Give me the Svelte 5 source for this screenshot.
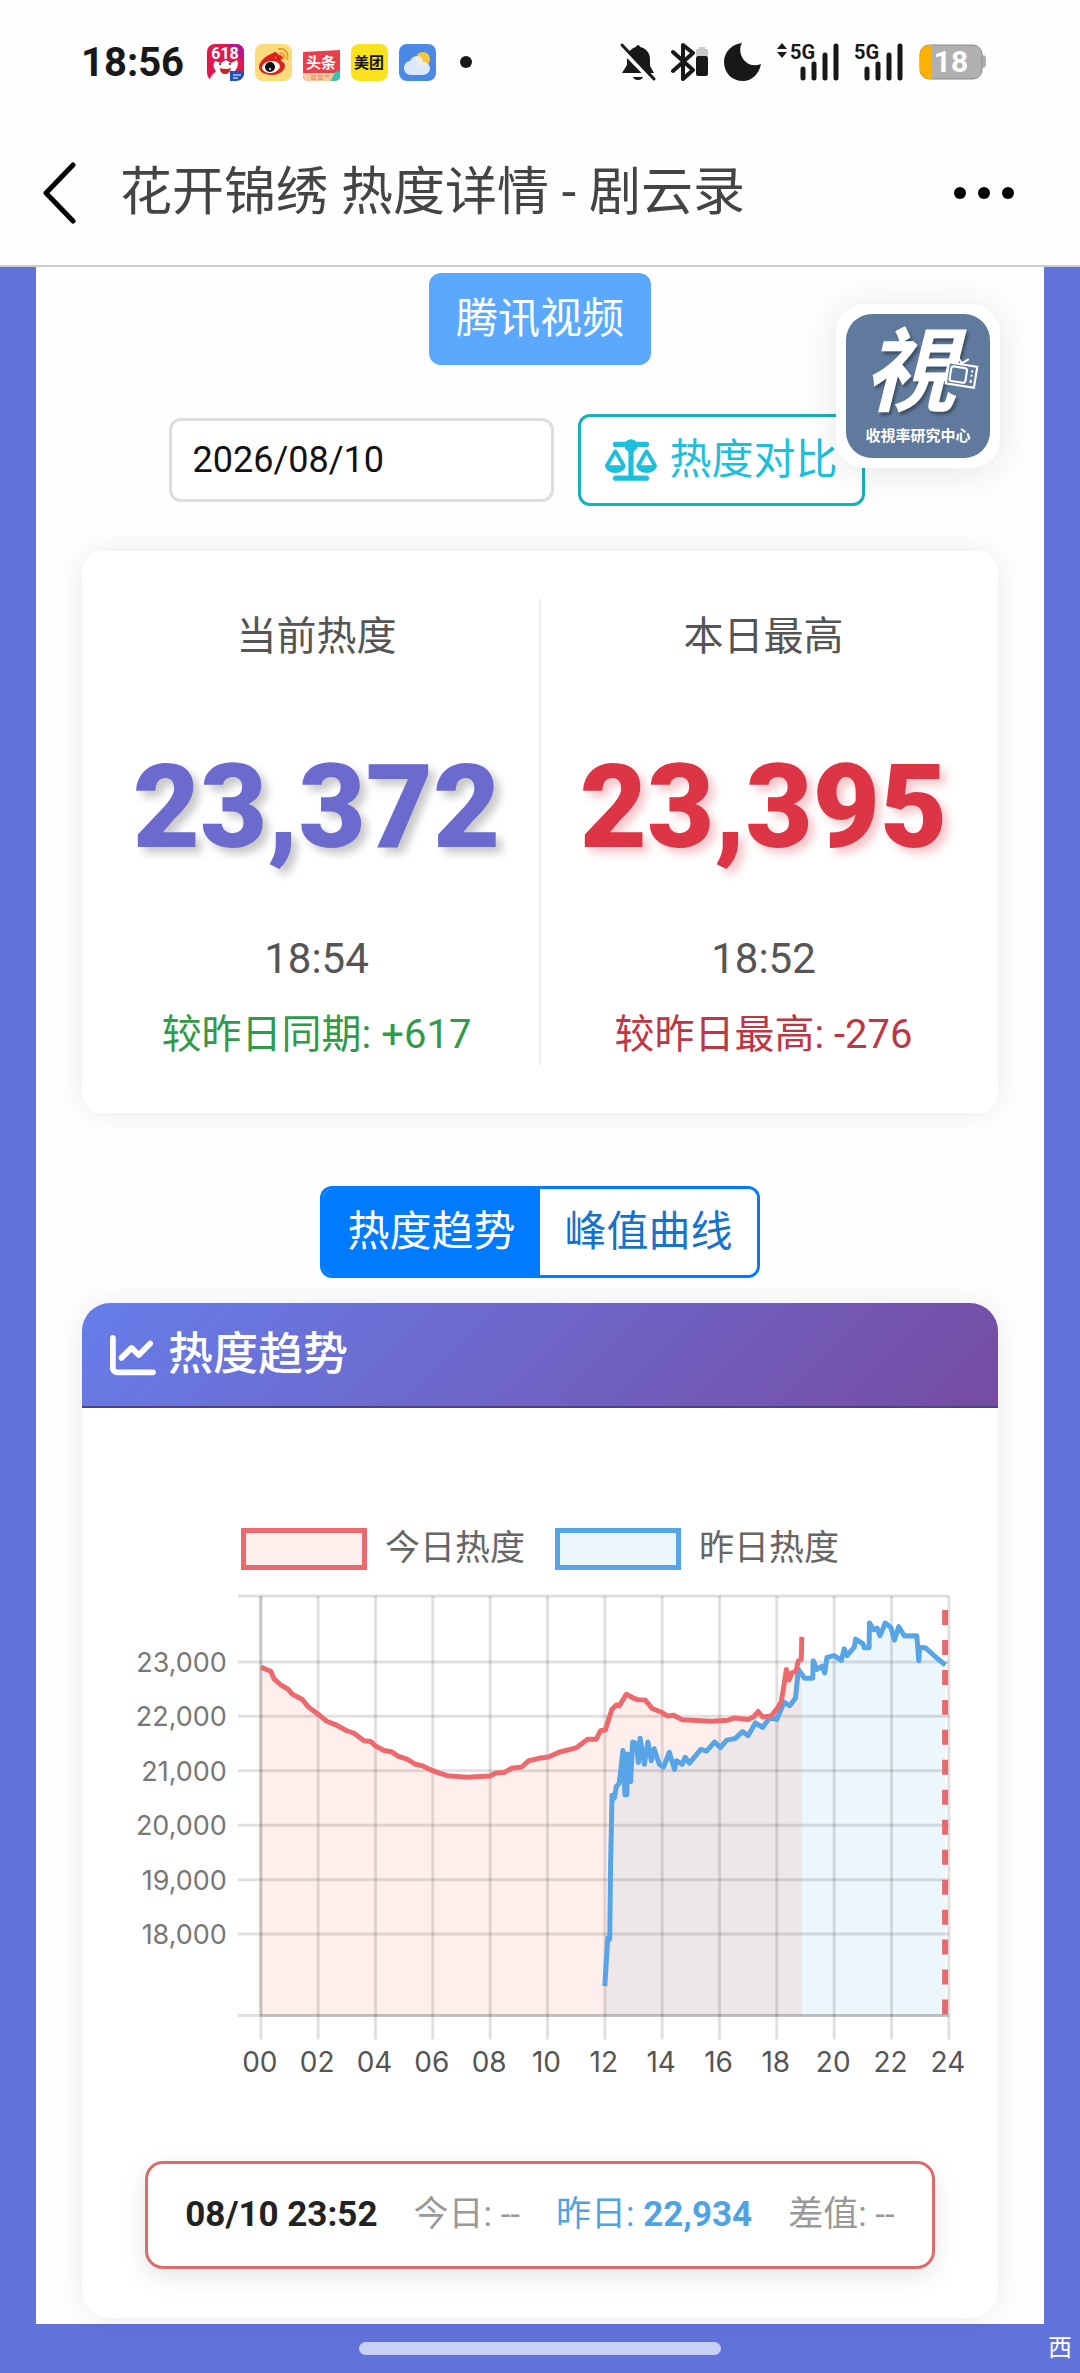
<script>
  let date = $state('2026/08/10');
  let tab = $state('trend');

  const tabs = [
    { id: 'trend', label: '热度趋势' },
    { id: 'peak', label: '峰值曲线' }
  ];

  const stats = [
    { label: '当前热度', value: '23,372', time: '18:54', diff: '较昨日同期: +617', kind: 'now', trend: 'up' },
    { label: '本日最高', value: '23,395', time: '18:52', diff: '较昨日最高: -276', kind: 'max', trend: 'down' }
  ];

  // [hour, heat]
  const today = [
    [0, 22905], [0.35, 22830], [0.46, 22690], [0.7, 22576], [0.95, 22500], [1.1, 22405], [1.45, 22310],
    [1.65, 22177], [2, 22040], [2.3, 21910], [2.6, 21850], [3, 21735], [3.25, 21690], [3.6, 21550],
    [3.83, 21540], [4, 21455], [4.3, 21375], [4.55, 21350], [4.8, 21266], [5.1, 21215], [5.4, 21120],
    [5.65, 21090], [5.9, 21025], [6.2, 20962], [6.5, 20910], [7.2, 20880], [8, 20905], [8.2, 20960],
    [8.5, 20970], [8.75, 21045], [9.1, 21070], [9.35, 21185], [9.7, 21230], [10.03, 21255], [10.4, 21342],
    [11, 21420], [11.4, 21582], [11.7, 21582], [11.85, 21735], [12.02, 21750], [12.15, 21975],
    [12.25, 22133], [12.4, 22210], [12.5, 22190], [12.75, 22405], [13, 22335], [13.15, 22303],
    [13.4, 22303], [13.65, 22145], [14, 22070], [14.2, 22005], [14.4, 22020], [14.7, 21937],
    [15.7, 21912], [16.3, 21930], [16.5, 21968], [17, 21943], [17.2, 21993], [17.35, 22090],
    [17.5, 21988], [17.8, 22005], [18.02, 22150], [18.15, 22260], [18.25, 22575], [18.33, 22860],
    [18.43, 22670], [18.53, 22800], [18.67, 22830], [18.75, 23020], [18.85, 23040], [18.87, 23460]
  ];

  const yesterday = [
    [12, 17045], [12.1, 17930], [12.17, 17910], [12.2, 19220], [12.25, 20550], [12.33, 20500],
    [12.4, 20710], [12.5, 20775], [12.58, 21120], [12.63, 21375], [12.7, 20560], [12.77, 20560],
    [12.78, 21310], [12.9, 20800], [12.97, 21530], [13.1, 21500], [13.17, 21150], [13.23, 21600],
    [13.38, 21120], [13.5, 21530], [13.62, 21185], [13.72, 21405], [13.9, 21120], [14.05, 21070],
    [14.25, 21342], [14.43, 21025], [14.5, 21185], [14.7, 21120], [14.8, 21250], [14.95, 21140],
    [15.35, 21393], [15.55, 21360], [15.83, 21530], [16.03, 21425], [16.25, 21563], [16.55, 21595],
    [16.8, 21720], [17, 21645], [17.25, 21880], [17.5, 21797], [17.75, 21975], [18, 21943],
    [18.25, 22260], [18.45, 22195], [18.65, 22335], [18.75, 22860], [18.97, 22700], [19.25, 22700],
    [19.27, 23020], [19.4, 22860], [19.58, 22925], [19.67, 22797], [19.75, 23082], [20, 23115],
    [20.25, 23030], [20.35, 23240], [20.45, 23115], [20.7, 23270], [20.75, 23418], [21, 23335],
    [21.05, 23260], [21.22, 23260], [21.23, 23715], [21.38, 23590], [21.5, 23620], [21.6, 23480],
    [21.78, 23715], [21.98, 23633], [22.1, 23400], [22.25, 23650], [22.45, 23475], [22.88, 23480],
    [22.95, 23020], [22.98, 23270], [23.2, 23255], [23.6, 23063], [23.88, 22943]
  ];

  const hours = [0, 2, 4, 6, 8, 10, 12, 14, 16, 18, 20, 22, 24];
  const ticks = [23000, 22000, 21000, 20000, 19000, 18000];

  const TOP = 10;
  const BOTTOM = 430;
  const x = (h) => 179 + h * 28.7;
  const y = (v) => 76 + (23000 - v) * 0.0545;

  const line = (pts) => 'M' + pts.map(([h, v]) => `${x(h).toFixed(1)} ${y(v).toFixed(1)}`).join('L');
  const area = (pts) => `${line(pts)}V${BOTTOM}H${x(pts[0][0])}Z`;
</script>

<div class="screen">
  <header>
    <div class="status">
      <span class="clock">18:56</span>
      <div class="apps">
        <svg viewBox="0 0 37 37">
          <rect width="37" height="37" rx="8" fill="#e0184e" />
          <path d="M20 0h9a8 8 0 0 1 8 8v9z" fill="#b5158f" />
          <text x="18" y="15" font-size="16" font-weight="700" fill="#fff" text-anchor="middle">618</text>
          <path d="M3 37c0-6 4-7 6-10-3-3-3-7-1-10l6 2 5-3 5 3 6-3c2 5 0 8-2 11 3 4 5 6 5 10z" fill="#fff" />
          <path d="M13 24q6 2 11 0-1 6-6 6t-5-6z" fill="#d32027" />
          <circle cx="13" cy="20" r="1" fill="#222" /><circle cx="23" cy="20" r="1" fill="#222" />
          <path d="M23 27h14v2a8 8 0 0 1-8 8h-6z" fill="#2251b8" />
          <path d="M26 31h8M26 34h5" stroke="#fff" stroke-width="1" />
        </svg>
        <svg viewBox="0 0 37 37">
          <rect width="37" height="37" rx="8" fill="#fbdc7c" />
          <path d="M16 12c-6 2-12 8-12 13 0 5 6 8 13 8 8 0 13-5 13-9 0-3-2-4-4-5 1-3 0-6-6-3 0-3 0-6-4-4z" fill="#dc2318" transform="translate(0 -2)" />
          <path d="M17 12q0-4 4-4l3 3q4 0 4 4" fill="#dc2318" />
          <ellipse cx="16" cy="23" rx="9" ry="6" fill="#fff" transform="rotate(-8 16 23)" />
          <circle cx="15" cy="23" r="5" fill="#111" /><circle cx="15" cy="25" r="1" fill="#fff" />
          <path d="M24 5c6-1 10 4 8 10M25 9c3 0 5 2 4 5" fill="none" stroke="#e9a02c" stroke-width="2" stroke-linecap="round" />
        </svg>
        <svg viewBox="0 0 37 37">
          <path d="M0 8l37-2v26a5 5 0 0 1-5 5H5a5 5 0 0 1-5-5z" fill="#e9404a" />
          <path d="M0 29h32l-4 8H5a5 5 0 0 1-5-5z" fill="#fac9a0" />
          <path d="M32 28l5-1v5a5 5 0 0 1-5 5h-4z" fill="#35c3b4" />
          <text x="18" y="24" font-size="15" font-weight="700" fill="#fff" text-anchor="middle">头条</text>
          <path d="M8 32h5M8 35h5M15 32h5M15 35h5M22 32h4" stroke="#e3704a" stroke-width="1" />
        </svg>
        <svg viewBox="0 0 37 37">
          <rect width="37" height="37" rx="8" fill="#f9e11e" />
          <text x="18" y="24" font-size="15" font-weight="700" fill="#15130a" text-anchor="middle">美团</text>
        </svg>
        <svg viewBox="0 0 37 37">
          <rect width="37" height="37" rx="8" fill="#4a8ae6" />
          <circle cx="24" cy="15" r="7" fill="#fbc73a" />
          <path d="M12 31c-4 0-7-3-7-7s3-7 6-7c1-3 4-5 7-5 4 0 6 3 6 6 4 0 7 3 7 6 0 4-3 7-7 7z" fill="#e9f1fb" fill-opacity=".92" />
        </svg>
      </div>
      <span class="more-dot"></span>
      <div class="system">
        <svg width="36" height="38" viewBox="0 0 36 38">
          <path d="M18 2c1 0 2 1 2 2 6 1 10 6 10 12v7l4 7H2l5-8v-6c0-6 4-11 9-12 0-1 1-2 2-2z" fill="#181818" />
          <path d="M13 34h10q-1 3-5 3t-5-3z" fill="#181818" />
          <path d="M0 5l32 33" stroke="#fff" stroke-width="4" />
          <path d="M2 2l32 34" stroke="#181818" stroke-width="3" stroke-linecap="round" />
        </svg>
        <svg width="38" height="38" viewBox="0 0 38 38">
          <path d="M2 9l20 18-10 9V2l10 8L2 28" fill="none" stroke="#181818" stroke-width="4" stroke-linejoin="round" stroke-linecap="round" />
          <path d="M25 13V6h3V4h6v2h3v7z" fill="#c9c9c9" />
          <rect x="25" y="13" width="12" height="20" rx="2" fill="#181818" />
        </svg>
        <svg width="38" height="38" viewBox="0 0 38 38">
          <path d="M18 0C12 10 22 27 37 21 35 31 28 38 19 38 8 38 0 30 0 19 0 9 8 1 18 0z" fill="#181818" />
        </svg>
        <svg width="62" height="54" viewBox="0 -8 62 54">
          <path d="M0 6l5-6 5 6zM0 9h10l-5 6z" fill="#181818" />
          <text x="13" y="16" font-size="20" font-weight="700" fill="#181818">5G</text>
          <path d="M26 26v9M37 21v14M48 12v23M59 3v32" stroke="#181818" stroke-width="5" stroke-linecap="round" />
        </svg>
        <svg width="50" height="54" viewBox="0 -8 50 54">
          <text x="0" y="16" font-size="20" font-weight="700" fill="#181818">5G</text>
          <path d="M13 26v9M24 21v14M35 12v23M46 3v32" stroke="#181818" stroke-width="5" stroke-linecap="round" />
        </svg>
        <svg width="68" height="36" viewBox="0 0 68 36">
          <path d="M63 11q4 0 4 3v7q0 3-4 3z" fill="#b0b0b0" />
          <rect x="1" y="1" width="62" height="34" rx="9" fill="#b0b0b0" stroke="#8b8b8b" />
          <path d="M13 1H10a9 9 0 0 0-9 9v16a9 9 0 0 0 9 9h3z" fill="#fcb100" />
          <text x="32" y="28" font-size="30" font-weight="700" fill="#fff" text-anchor="middle">18</text>
        </svg>
      </div>
    </div>

    <nav>
      <button class="icon-btn" aria-label="返回">
        <svg width="34" height="64" viewBox="0 0 34 64">
          <path d="M31 4L4 32l27 28" fill="none" stroke="#000" stroke-width="5" stroke-linecap="round" stroke-linejoin="round" />
        </svg>
      </button>
      <h1>花开锦绣 热度详情 - 剧云录</h1>
      <button class="icon-btn" aria-label="更多">
        <svg width="60" height="12" viewBox="0 0 60 12">
          <circle cx="6" cy="6" r="6" /><circle cx="30" cy="6" r="6" /><circle cx="54" cy="6" r="6" />
        </svg>
      </button>
    </nav>
  </header>

  <main>
    <a class="logo" href="#home">
      <span class="logo-inner">
        <span class="logo-char">視</span>
        <span class="logo-name">收視率研究中心</span>
        <svg class="tv" viewBox="0 0 34 34">
          <g transform="rotate(9 17 20)" fill="none" stroke="#fff" stroke-width="2">
            <rect x="3" y="10" width="27" height="20" fill="#5f7a9c" />
            <rect x="6" y="13" width="15" height="14" rx="2" />
            <path d="M9 2l6 7 6-5M26 14v2M26 18v2M26 23v3" />
          </g>
        </svg>
      </span>
    </a>

    <span class="platform">腾讯视频</span>

    <div class="controls">
      <input type="text" aria-label="日期" bind:value={date} />
      <button class="compare">
        <svg width="52" height="42" viewBox="0 0 640 512" fill="currentColor">
          <path d="M384 32l128 0c17.7 0 32 14.3 32 32s-14.3 32-32 32L398.4 96c-5.2 25.8-22.9 47.1-46.4 57.3L352 448l160 0c17.7 0 32 14.3 32 32s-14.3 32-32 32l-192 0-192 0c-17.7 0-32-14.3-32-32s14.3-32 32-32l160 0 0-294.7c-23.5-10.3-41.2-31.6-46.4-57.3L128 96c-17.7 0-32-14.3-32-32s14.3-32 32-32l128 0c14.6-19.4 37.8-32 64-32s49.4 12.6 64 32zm55.6 288l144.9 0L512 195.8 439.6 320zM512 416c-62.9 0-115.2-34-126-78.9c-2.6-11 1-22.3 6.7-32.1l95.2-163.2c5-8.6 14.2-13.8 24.1-13.8s19.1 5.3 24.1 13.8l95.2 163.2c5.7 9.8 9.3 21.1 6.7 32.1C627.2 382 574.9 416 512 416zM126.8 195.8L54.4 320l144.9 0L126.8 195.8zM.9 337.1c-2.6-11 1-22.3 6.7-32.1l95.2-163.2c5-8.6 14.2-13.8 24.1-13.8s19.1 5.3 24.1 13.8l95.2 163.2c5.7 9.8 9.3 21.1 6.7 32.1C242 382 189.7 416 126.8 416S11.7 382 .9 337.1z" />
        </svg>
        热度对比
      </button>
    </div>

    <section class="stats">
      {#each stats as s}
        <div class="stat">
          <div class="stat-label">{s.label}</div>
          <div class="stat-value {s.kind}">{s.value}</div>
          <div class="stat-time">{s.time}</div>
          <div class="stat-diff {s.trend}">{s.diff}</div>
        </div>
      {/each}
    </section>

    <div class="tabs">
      {#each tabs as t}
        <button class:active={tab === t.id} onclick={() => (tab = t.id)}>{t.label}</button>
      {/each}
    </div>

    <section class="chart-card">
      <h2>
        <svg width="46" height="46" viewBox="0 0 512 512" fill="currentColor">
          <path d="M64 64c0-17.7-14.3-32-32-32S0 46.3 0 64L0 400c0 44.2 35.8 80 80 80l400 0c17.7 0 32-14.3 32-32s-14.3-32-32-32L80 416c-8.8 0-16-7.2-16-16L64 64zm406.6 86.6c12.5-12.5 12.5-32.8 0-45.3s-32.8-12.5-45.3 0L320 210.7l-57.4-57.4c-12.5-12.5-32.8-12.5-45.3 0l-112 112c-12.5 12.5-12.5 32.8 0 45.3s32.8 12.5 45.3 0L240 221.3l57.4 57.4c12.5 12.5 32.8 12.5 45.3 0l128-128z" />
        </svg>
        热度趋势
      </h2>

      <div class="legend">
        <span class="swatch today"></span><span>今日热度</span>
        <span class="swatch yesterday"></span><span>昨日热度</span>
      </div>

      <svg class="chart" viewBox="0 0 917 500">
        <path d={area(yesterday)} fill="#36a2eb" fill-opacity=".1" />
        <path d={area(today)} fill="#ff6347" fill-opacity=".1" />

        <g stroke="#000" stroke-opacity=".12" stroke-width="3">
          <line x1="156" x2={x(24)} y1={TOP} y2={TOP} />
          {#each ticks as t}
            <line x1="156" x2={x(24)} y1={y(t)} y2={y(t)} />
          {/each}
          {#each hours as h}
            <line x1={x(h)} x2={x(h)} y1={TOP} y2="454" />
          {/each}
          <line x1="156" x2={x(24)} y1={BOTTOM} y2={BOTTOM} />
          <line x1={x(0)} x2={x(24)} y1={BOTTOM} y2={BOTTOM} />
          <line x1={x(0)} x2={x(0)} y1={TOP} y2={BOTTOM} />
        </g>

        <path d={line(yesterday)} class="series" stroke="#57a5e6" />
        <path d={line(today)} class="series" stroke="#ec6a6e" />
        <line x1={x(23.87)} x2={x(23.87)} y1="24" y2={BOTTOM} stroke="#e56a70" stroke-width="6" stroke-dasharray="15 15" />

        {#each ticks as t}
          <text class="tick-y" x="145" y={y(t) + 10}>{t.toLocaleString('en-US')}</text>
        {/each}
        {#each hours as h}
          <text class="tick-x" x={x(h) - 1} y="487">{String(h).padStart(2, '0')}</text>
        {/each}
      </svg>

      <div class="readout">
        <strong class="when">08/10 23:52</strong>
        <span>今日: --</span>
        <span class="blue">昨日: <strong>22,934</strong></span>
        <span>差值: --</span>
      </div>
    </section>
  </main>

  <footer>
    <span class="home-bar"></span>
    <span class="mark">西</span>
  </footer>
</div>

<style>
  :global(body) {
    background: #6172da;
  }

  .screen {
    font-family: Roboto, 'Noto Sans CJK SC', sans-serif;
    color: #555;
    background: #6172da;
  }

  button {
    font-family: inherit;
    cursor: pointer;
  }

  header {
    background: #fefefe;
    border-bottom: 2px solid #ccc;
  }

  .status {
    display: flex;
    align-items: center;
    height: 124px;
    padding: 0 93px 0 81px;
  }

  .clock {
    width: 126px;
    font-size: 40px;
    font-weight: 700;
    color: #181818;
  }

  .apps {
    display: flex;
    gap: 11px;
  }

  .apps svg {
    width: 37px;
    height: 37px;
  }

  .more-dot {
    width: 12px;
    height: 12px;
    margin-left: 24px;
    border-radius: 50%;
    background: #181818;
  }

  .system {
    display: flex;
    align-items: center;
    gap: 15px;
    margin-left: auto;
  }

  nav {
    display: flex;
    align-items: center;
    height: 137px;
    padding: 0 66px 4px 42px;
  }

  .icon-btn {
    display: flex;
    padding: 0;
    border: 0;
    background: none;
  }

  h1 {
    flex: 1;
    margin: 0 0 0 44px;
    font-size: 52px;
    line-height: 60px;
    font-weight: 400;
    color: #444;
  }

  main {
    position: relative;
    display: flex;
    flex-direction: column;
    align-items: center;
    margin: 0 36px;
    padding: 6px 46px;
    background: #fefefe;
  }

  .logo {
    position: absolute;
    top: 37px;
    right: 44px;
    padding: 10px;
    border-radius: 28px;
    background: #fff;
    box-shadow: 0 4px 40px rgba(0, 0, 0, 0.1);
    text-decoration: none;
  }

  .logo-inner {
    position: relative;
    display: flex;
    flex-direction: column;
    align-items: center;
    width: 144px;
    height: 144px;
    border-radius: 26px;
    background: #5f7a9c;
    color: #fff;
  }

  .logo-char {
    margin-top: 8px;
    padding-right: 16px;
    font-size: 92px;
    line-height: 102px;
    font-weight: 700;
    font-style: italic;
    text-shadow: 2px 3px 3px rgba(0, 0, 0, 0.35);
  }

  .logo-name {
    font-size: 15px;
    line-height: 24px;
    font-weight: 700;
  }

  .tv {
    position: absolute;
    top: 40px;
    right: 10px;
    width: 36px;
    height: 36px;
  }

  .platform {
    padding: 0 27px;
    border-radius: 12px;
    background: #5aa9ff;
    color: #fff;
    font-size: 42px;
    line-height: 92px;
  }

  .controls {
    display: flex;
    align-items: center;
    gap: 24px;
    margin-top: 49px;
    padding-right: 46px;
  }

  input {
    box-sizing: border-box;
    width: 385px;
    height: 84px;
    padding: 0 20px;
    border: 3px solid #ddd;
    border-radius: 12px;
    background: #fff;
    font-family: inherit;
    font-size: 36px;
    color: #111;
  }

  .compare {
    display: flex;
    align-items: center;
    gap: 12px;
    height: 92px;
    padding: 0 24px;
    border: 3px solid #17b0bb;
    border-radius: 12px;
    background: #fff;
    color: #1cbfdc;
    font-size: 42px;
    line-height: 60px;
  }

  .stats {
    display: flex;
    align-self: stretch;
    margin-top: 45px;
    padding: 48px 12px;
    border-radius: 20px;
    background: #fff;
    box-shadow: 0 0 30px rgba(0, 0, 0, 0.08);
  }

  .stat {
    flex: 1;
    padding-top: 8px;
    text-align: center;
    white-space: nowrap;
  }

  .stat + .stat {
    border-left: 2px solid #eee;
  }

  .stat-label,
  .stat-diff {
    font-size: 40px;
    line-height: 60px;
  }

  .stat-value {
    margin: 70px 0 52px;
    font-size: 116px;
    line-height: 140px;
    font-weight: 900;
  }

  .stat-value.now {
    color: #6b6bce;
    text-shadow: 6px 6px 8px rgba(0, 0, 0, 0.22);
  }

  .stat-value.max {
    color: #dc3545;
    text-shadow: 6px 6px 8px rgba(220, 53, 69, 0.28);
  }

  .stat-time {
    margin-bottom: 16px;
    font-size: 42px;
    line-height: 60px;
  }

  .up {
    color: #2f9a48;
  }

  .down {
    color: #bd3643;
  }

  .tabs {
    display: flex;
    margin-top: 73px;
    border: 3px solid #007bff;
    border-radius: 12px;
    overflow: hidden;
  }

  .tabs button {
    width: 217px;
    padding: 0;
    border: 0;
    background: #fff;
    color: #1673cd;
    font-size: 42px;
    line-height: 86px;
  }

  .tabs button.active {
    background: #007bff;
    color: #fff;
  }

  .chart-card {
    align-self: stretch;
    margin-top: 25px;
    padding-bottom: 49px;
    border-radius: 28px;
    background: #fff;
    box-shadow: 0 0 30px rgba(0, 0, 0, 0.08);
  }

  h2 {
    display: flex;
    align-items: center;
    gap: 12px;
    margin: 0;
    padding: 0 28px;
    border-bottom: 2px solid #4f3f91;
    border-radius: 28px 28px 0 0;
    background: linear-gradient(135deg, #667eea, #764ba2);
    color: #fff;
    font-size: 45px;
    line-height: 103px;
    font-weight: 500;
  }

  .legend {
    display: flex;
    justify-content: center;
    align-items: center;
    gap: 18px;
    margin-top: 120px;
    color: #666;
    font-size: 35px;
    line-height: 42px;
  }

  .swatch {
    box-sizing: border-box;
    width: 126px;
    height: 42px;
    border: 5px solid;
  }

  .swatch.today {
    border-color: #ec6a6e;
    background: #ffefed;
  }

  .swatch.yesterday {
    margin-left: 12px;
    border-color: #57a5e6;
    background: #ebf6fd;
  }

  .chart {
    display: block;
    width: 100%;
    margin-top: 16px;
  }

  .series {
    fill: none;
    stroke-width: 5;
    stroke-linejoin: round;
  }

  .tick-y,
  .tick-x {
    font-family: Inter, sans-serif;
    font-size: 27px;
    fill: #777;
    text-anchor: end;
  }

  .tick-x {
    font-size: 28px;
    fill: #555;
    text-anchor: middle;
  }

  .readout {
    display: flex;
    justify-content: center;
    gap: 36px;
    margin: 76px 63px 0;
    border: 3px solid #dd6b6b;
    border-radius: 18px;
    background: #fff;
    box-shadow: 0 8px 24px rgba(0, 0, 0, 0.1);
    color: #999;
    font-size: 35px;
    line-height: 102px;
    white-space: nowrap;
  }

  .when {
    color: #222;
  }

  .blue {
    color: #50a3e3;
  }

  footer {
    display: grid;
    grid-template-columns: 1fr 362px 1fr;
    align-items: center;
    height: 48px;
    padding: 0 8px;
  }

  .home-bar {
    grid-column: 2;
    height: 13px;
    border-radius: 7px;
    background: #c8d0f4;
  }

  .mark {
    justify-self: end;
    color: #fff;
    font-size: 24px;
    line-height: 40px;
  }
</style>
